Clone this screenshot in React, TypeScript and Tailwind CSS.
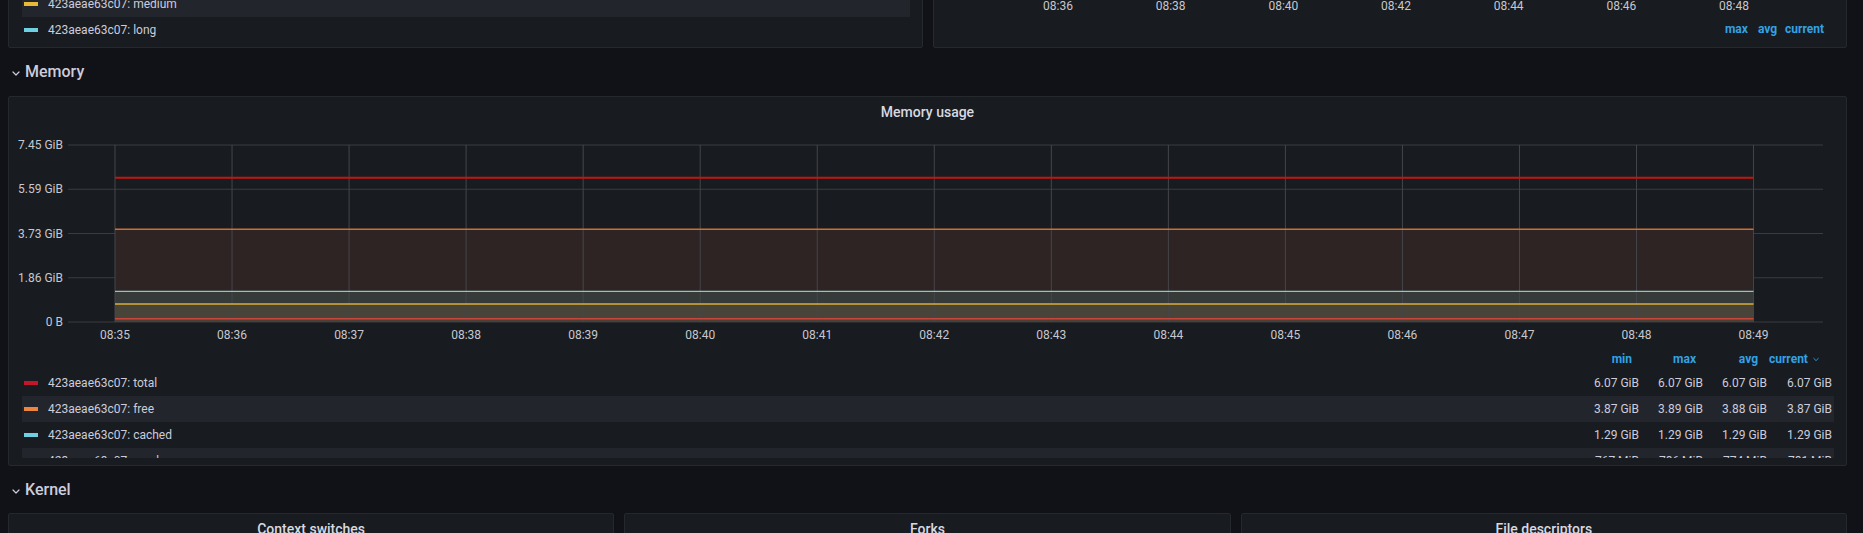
import React from 'react';

type Series = {
  name: string;
  color: string;
  values: [string, string, string, string];
};

const memorySeries: Series[] = [
  { name: '423aeae63c07: total', color: '#c4162a', values: ['6.07 GiB', '6.07 GiB', '6.07 GiB', '6.07 GiB'] },
  { name: '423aeae63c07: free', color: '#ef843c', values: ['3.87 GiB', '3.89 GiB', '3.88 GiB', '3.87 GiB'] },
  { name: '423aeae63c07: cached', color: '#6ed0e0', values: ['1.29 GiB', '1.29 GiB', '1.29 GiB', '1.29 GiB'] },
  { name: '423aeae63c07: used', color: '#eab839', values: ['767 MiB', '786 MiB', '774 MiB', '781 MiB'] },
];

const yTicks = ['7.45 GiB', '5.59 GiB', '3.73 GiB', '1.86 GiB', '0 B'];
const xTicks = Array.from({ length: 15 }, (_, i) => `08:${String(35 + i).padStart(2, '0')}`);
const topTicks = ['08:36', '08:38', '08:40', '08:42', '08:44', '08:46', '08:48'];

function Chevron({ className = '' }: { className?: string }) {
  return (
    <svg width="8" height="5" viewBox="0 0 8 5" className={className} fill="none">
      <path d="M1 1l3 3 3-3" stroke="currentColor" strokeWidth="1.2" strokeLinecap="round" strokeLinejoin="round" />
    </svg>
  );
}

function RowHeader({ title }: { title: string }) {
  return (
    <div className="flex items-center gap-[5px] pl-[4px] text-[16px] font-medium text-[#ccccdc]">
      <Chevron className="mt-[3px] text-[#ccccdc]" />
      <span>{title}</span>
    </div>
  );
}

function LegendRow({ s, highlight }: { s: Series; highlight: boolean }) {
  return (
    <div className={`flex h-[26px] shrink-0 items-center text-[12px] text-[#ccccdc] ${highlight ? 'bg-[#22252b]' : ''}`}>
      <span className="ml-[2px] h-[4px] w-[14px]" style={{ backgroundColor: s.color }} />
      <span className="ml-[10px] flex-1">{s.name}</span>
      <span className="w-[63px] pr-[2px] text-right">{s.values[0]}</span>
      <span className="w-[64px] pr-[2px] text-right">{s.values[1]}</span>
      <span className="w-[64px] pr-[2px] text-right">{s.values[2]}</span>
      <span className="w-[65px] pr-[2px] text-right">{s.values[3]}</span>
    </div>
  );
}

function MemoryChart() {
  const gridTop = 17;
  const gridStep = 44.25;
  const xStart = 106;
  const xStep = 117.04;
  const xEnd = xStart + xStep * 14;
  const zero = gridTop + gridStep * 4;

  return (
    <svg width="1837" height="220" className="block font-['Roboto',sans-serif]">
      {/* horizontal grid */}
      {yTicks.map((t, i) => (
        <g key={t}>
          <line x1={59} x2={1814} y1={gridTop + i * gridStep} y2={gridTop + i * gridStep} stroke="#3a3c41" strokeWidth="1" />
          <text
            x={54}
            y={gridTop + i * gridStep}
            textAnchor="end"
            dominantBaseline="central"
            fontSize="12"
            fill="#c7c7cf"
          >
            {t}
          </text>
        </g>
      ))}

      {/* stacked fills */}
      <rect x={xStart} y={101.3} width={xEnd - xStart} height={163.3 - 101.3} fill="#2e2423" />
      <rect x={xStart} y={163.3} width={xEnd - xStart} height={176 - 163.3} fill="#363a39" />
      <rect x={xStart} y={176} width={xEnd - xStart} height={190.7 - 176} fill="#48443a" />
      <rect x={xStart} y={190.7} width={xEnd - xStart} height={zero - 190.7} fill="#4b4038" />

      {/* vertical grid */}
      {xTicks.map((t, i) => (
        <g key={t}>
          <line
            x1={xStart + i * xStep}
            x2={xStart + i * xStep}
            y1={gridTop}
            y2={zero}
            stroke="#45464b"
            strokeWidth="1"
          />
          <text x={xStart + i * xStep} y={207} textAnchor="middle" dominantBaseline="central" fontSize="12" fill="#c7c7cf">
            {t}
          </text>
        </g>
      ))}

      {/* series lines */}
      <line x1={xStart} x2={xEnd} y1={49.7} y2={49.7} stroke="#c4160f" strokeWidth="2" />
      <line x1={xStart} x2={xEnd} y1={101.3} y2={101.3} stroke="#cf6e32" strokeWidth="1.5" />
      <line x1={xStart} x2={xEnd} y1={163.3} y2={163.3} stroke="#86c9cc" strokeWidth="1.2" />
      <line x1={xStart} x2={xEnd} y1={176} y2={176} stroke="#d9ae3a" strokeWidth="1.5" />
      <line x1={xStart} x2={xEnd} y1={190.7} y2={190.7} stroke="#c9473a" strokeWidth="1.5" />
    </svg>
  );
}

function KernelPanel({ title }: { title: string }) {
  return (
    <div className="h-[60px] rounded-[2px] border border-[#25282d] bg-[#181b1f]">
      <div className="flex h-[31px] items-center justify-center text-[14px] font-medium text-[#d8d9e0]">{title}</div>
    </div>
  );
}

export default function App() {
  return (
    <div className="h-[533px] w-[1863px] overflow-hidden bg-[#111217] font-['Roboto',sans-serif]">
      <div className="-mt-[20px] pl-[8px] pr-[16px]">
        {/* previous row, scrolled partly out of view */}
        <div className="flex gap-[10px]">
          <div className="h-[68px] w-[915px] rounded-[2px] border border-[#25282d] bg-[#181b1f] px-[13px] pt-[10px] pr-[12px]">
            <div className="flex h-[26px] items-center bg-[#22252b] text-[12px] text-[#ccccdc]">
              <span className="ml-[2px] h-[4px] w-[14px] bg-[#eab839]" />
              <span className="ml-[10px]">423aeae63c07: medium</span>
            </div>
            <div className="flex h-[26px] items-center text-[12px] text-[#ccccdc]">
              <span className="ml-[2px] h-[4px] w-[14px] bg-[#6ed0e0]" />
              <span className="ml-[10px]">423aeae63c07: long</span>
            </div>
          </div>
          <div className="h-[68px] flex-1 rounded-[2px] border border-[#25282d] bg-[#181b1f]">
            <svg width="912" height="34" className="block font-['Roboto',sans-serif]">
              {topTicks.map((t, i) => (
                <text key={t} x={124 + i * 112.67} y={25} textAnchor="middle" dominantBaseline="central" fontSize="12" fill="#c7c7cf">
                  {t}
                </text>
              ))}
            </svg>
            <div className="flex h-[28px] items-center justify-end pr-[22px] text-[12px] font-bold text-[#33a2e5]">
              <span>max</span>
              <span className="ml-[10px]">avg</span>
              <span className="ml-[8px]">current</span>
            </div>
          </div>
        </div>

        <div className="flex h-[48px] items-center">
          <RowHeader title="Memory" />
        </div>

        <div className="h-[370px] rounded-[2px] border border-[#25282d] bg-[#181b1f]">
          <div className="flex h-[31px] items-center justify-center text-[14px] font-medium text-[#d8d9e0]">Memory usage</div>
          <MemoryChart />
          <div className="flex h-[110px] flex-col overflow-hidden pl-[13px] pr-[12px]">
            <div className="flex h-[22px] shrink-0 items-center text-[12px] font-bold text-[#33a2e5]">
              <span className="flex-1" />
              <span className="w-[63px] pr-[9px] text-right">min</span>
              <span className="w-[64px] pr-[9px] text-right">max</span>
              <span className="w-[64px] pr-[11px] text-right">avg</span>
              <span className="flex w-[65px] items-center justify-end gap-[5px] pr-[15px]">
                current
                <Chevron />
              </span>
            </div>
            {memorySeries.map((s, i) => (
              <LegendRow key={s.name} s={s} highlight={i % 2 === 1} />
            ))}
          </div>
        </div>

        <div className="flex h-[47px] items-center">
          <RowHeader title="Kernel" />
        </div>

        <div className="grid grid-cols-3 gap-[10px]">
          <KernelPanel title="Context switches" />
          <KernelPanel title="Forks" />
          <KernelPanel title="File descriptors" />
        </div>
      </div>
    </div>
  );
}
